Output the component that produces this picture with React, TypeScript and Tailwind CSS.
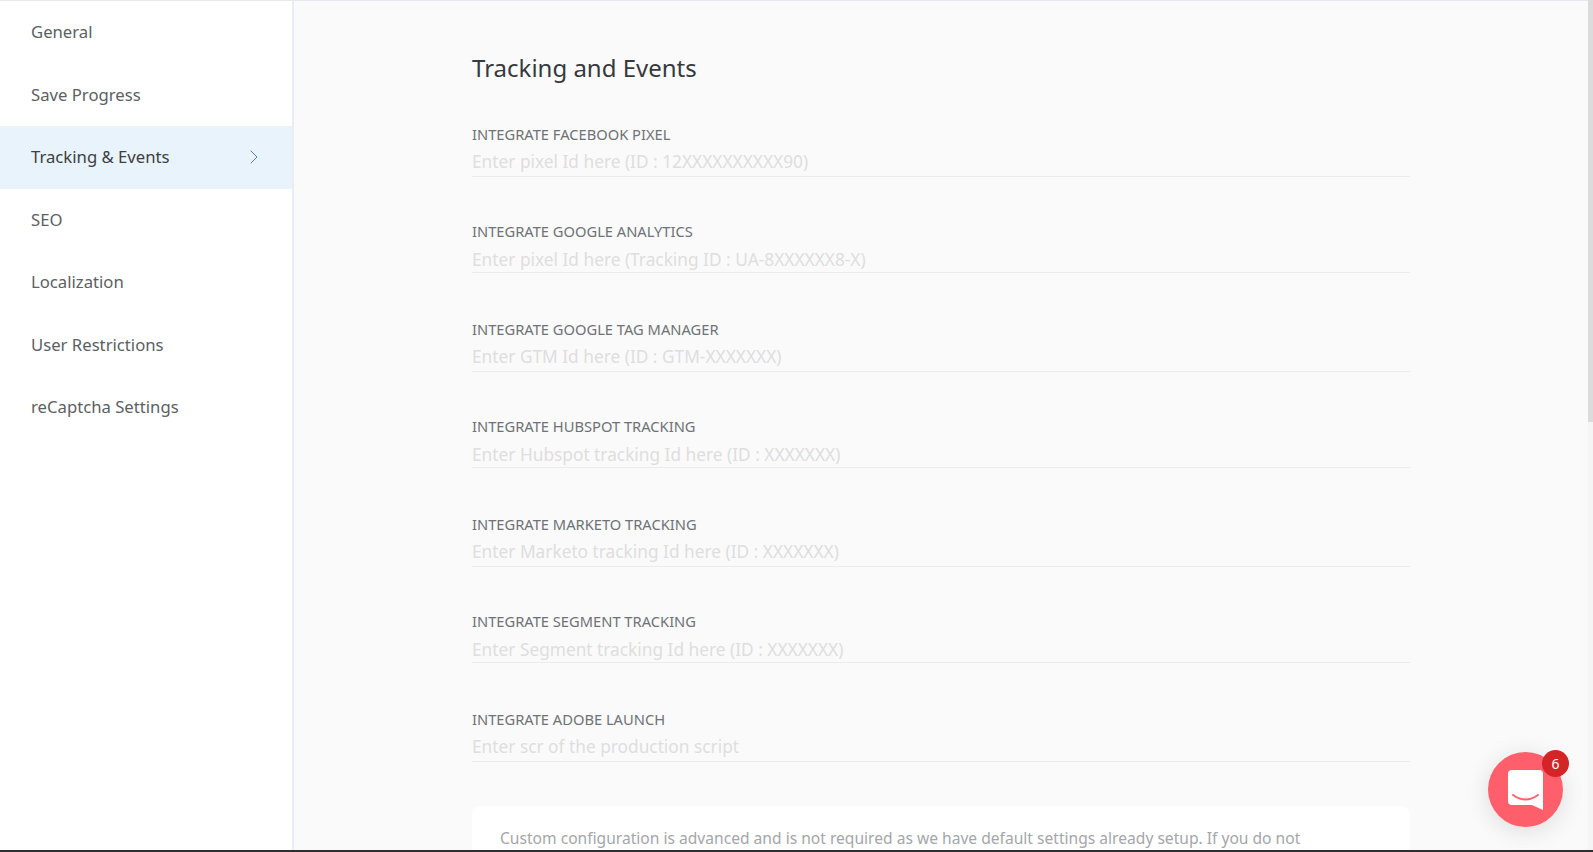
import { ChevronRight } from 'lucide-react'

const menu = ['General', 'Save Progress', 'Tracking & Events', 'SEO', 'Localization', 'User Restrictions', 'reCaptcha Settings']

const fields = [
    { label: 'INTEGRATE FACEBOOK PIXEL', hint: 'Enter pixel Id here (ID : 12XXXXXXXXXX90)', row: 'mt-0', box: 'mt-[6px] h-[29px] leading-[29px]' },
    { label: 'INTEGRATE GOOGLE ANALYTICS', hint: 'Enter pixel Id here (Tracking ID : UA-8XXXXXX8-X)', row: 'mt-[47px]', box: 'mt-[9px] h-[25px] leading-[25px]' },
    { label: 'INTEGRATE GOOGLE TAG MANAGER', hint: 'Enter GTM Id here (ID : GTM-XXXXXXX)', row: 'mt-[49px]', box: 'mt-[6px] h-[29px] leading-[29px]' },
    { label: 'INTEGRATE HUBSPOT TRACKING', hint: 'Enter Hubspot tracking Id here (ID : XXXXXXX)', row: 'mt-[47px]', box: 'mt-[9px] h-[25px] leading-[25px]' },
    { label: 'INTEGRATE MARKETO TRACKING', hint: 'Enter Marketo tracking Id here (ID : XXXXXXX)', row: 'mt-[49px]', box: 'mt-[6px] h-[29px] leading-[29px]' },
    { label: 'INTEGRATE SEGMENT TRACKING', hint: 'Enter Segment tracking Id here (ID : XXXXXXX)', row: 'mt-[47px]', box: 'mt-[9px] h-[25px] leading-[25px]' },
    { label: 'INTEGRATE ADOBE LAUNCH', hint: 'Enter scr of the production script', row: 'mt-[49px]', box: 'mt-[6px] h-[29px] leading-[29px]' },
]

export default function App() {
    return (
        <div className="relative flex h-[852px] overflow-hidden font-['Noto_Sans',sans-serif] bg-[#fafafa]">
            <div className="flex flex-1 min-w-0 border-t border-[#e6eaee]">
                <aside className="w-[294px] shrink-0 bg-white border-r-2 border-[#eaedf1]">
                    {menu.map((m) => {
                        const active = m === 'Tracking & Events'
                        return (
                            <div
                                key={m}
                                className={`flex items-center justify-between h-[62.5px] pl-[31px] pr-[26px] pb-px text-[16.7px] ${active ? 'bg-[#e8f3fb] text-[#3c3f44]' : 'text-[#5c5f63]'}`}
                            >
                                <span>{m}</span>
                                {active && <ChevronRight size={24} strokeWidth={1} className="text-[#4a80c4]" />}
                            </div>
                        )
                    })}
                </aside>

                <main className="flex-1 pl-[178px] overflow-hidden">
                    <div className="w-[938px]">
                        <h1 className="pt-[52px] h-[126px] text-[24px] leading-[30px] text-[#36393d]">Tracking and Events</h1>
                        {fields.map((f) => (
                            <div key={f.label} className={f.row}>
                                <label className="block h-[14px] text-[14.7px] leading-[14px] text-[#6f7276]">{f.label}</label>
                                <div className={`${f.box} box-content border-b border-[#ececec] text-[17.3px] text-[#dedede]`}>{f.hint}</div>
                            </div>
                        ))}
                        <div className="mt-[44px] rounded-lg bg-white px-7 pt-[20px] pb-6 text-[15.6px] leading-6 text-[#a4a6aa]">
                            Custom configuration is advanced and is not required as we have default settings already setup. If you do not
                        </div>
                    </div>
                </main>
            </div>

            <div className="w-[5px] shrink-0 bg-[#f5f5f5]">
                <div className="h-[422px] bg-[#dcdcdc]" />
            </div>

            <div className="absolute bottom-0 left-0 right-0 h-[2px] bg-[#2b2e33]" />

            <div className="absolute left-[1488px] top-[752px] flex h-[75px] w-[75px] items-center justify-center rounded-full bg-[#ff5f6b] shadow-[0_4px_24px_rgba(0,0,0,0.12)]">
                <svg width="35" height="40" viewBox="0 0 35 40">
                    <path d="M4 0h27a4 4 0 0 1 4 4v36l-11-5H4a4 4 0 0 1-4-4V4a4 4 0 0 1 4-4z" fill="#fff" />
                    <path d="M5 25q12.500 9 25 0" fill="none" stroke="#ff5f6b" strokeWidth="2" strokeLinecap="round" />
                </svg>
                <span className="absolute -top-[2px] -right-[6px] flex h-[27px] w-[27px] items-center justify-center rounded-full bg-[#d32528] text-[14px] text-white">6</span>
            </div>
        </div>
    )
}
